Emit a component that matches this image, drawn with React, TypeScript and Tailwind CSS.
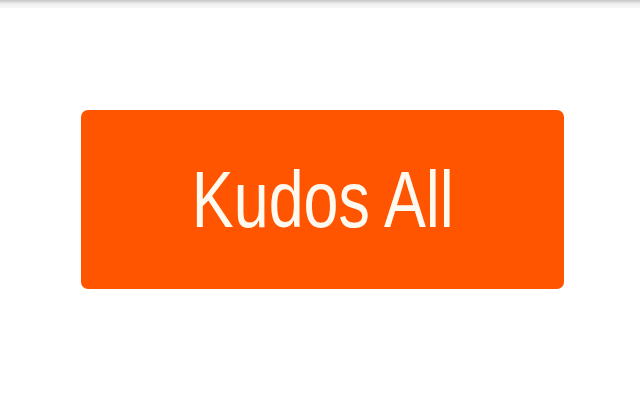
export default function App() {
  return (
    <div className="w-[640px] h-[400px] bg-white flex flex-col overflow-hidden">
      <div className="h-[8px] bg-gradient-to-b from-[#c4c4c4] via-[#f1f1f1] to-[#f7f7f7]" />
      <div className="pl-[81px] pt-[102px]">
        <button
          type="button"
          className="w-[483px] h-[179px] rounded-[7px] bg-[#ff5500] text-[#fffaf0] flex items-center justify-center"
        >
          <span className="inline-block whitespace-nowrap text-[80px] leading-none font-['Liberation_Sans',Arial,sans-serif] scale-x-[0.785]">
            Kudos All
          </span>
        </button>
      </div>
    </div>
  );
}
